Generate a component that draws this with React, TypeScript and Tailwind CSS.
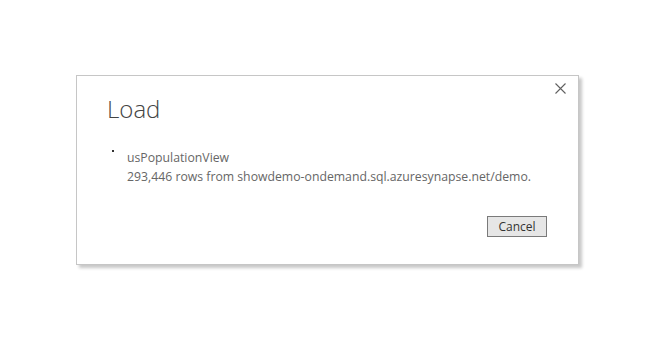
import React from "react";

export default function App() {
  return (
    <div className="w-[651px] h-[348px] bg-white pl-[76px] pt-[75px]" style={{ fontFamily: '"Open Sans", "Noto Sans", sans-serif' }}>
      {/* Load dialog */}
      <div className="relative w-[503px] h-[190px] bg-white border border-[#c6c6c6] shadow-[3px_3px_3px_rgba(0,0,0,0.22)] flex flex-col">
        <button className="absolute left-[478px] top-[7px]">
          <svg width="11" height="11" viewBox="0 0 11 11" className="block">
            <path d="M0.5 0.5 L10.5 10.5 M10.5 0.5 L0.5 10.5" stroke="#606060" strokeWidth="1.1" />
          </svg>
        </button>

        <h1 className="pl-[30px] pt-[17px] text-[24px] leading-[32px] font-light text-[#444]">Load</h1>

        <div className="flex pl-[35px] pt-[23px] text-[12.25px] leading-[19px] text-[#666]">
          <div className="w-[2px] h-[2px] bg-[#333] mt-[2px] mr-[13px]" />
          <div className="flex flex-col">
            <span>usPopulationView</span>
            <span>293,446 rows from showdemo-ondemand.sql.azuresynapse.net/demo.</span>
          </div>
        </div>

        <div className="flex justify-end pr-[31px] mt-auto pb-[27px]">
          <button className="w-[60px] h-[21px] bg-[#e6e6e6] border border-[#7a7a7a] text-[12px] text-[#333] leading-none">
            Cancel
          </button>
        </div>
      </div>
    </div>
  );
}
